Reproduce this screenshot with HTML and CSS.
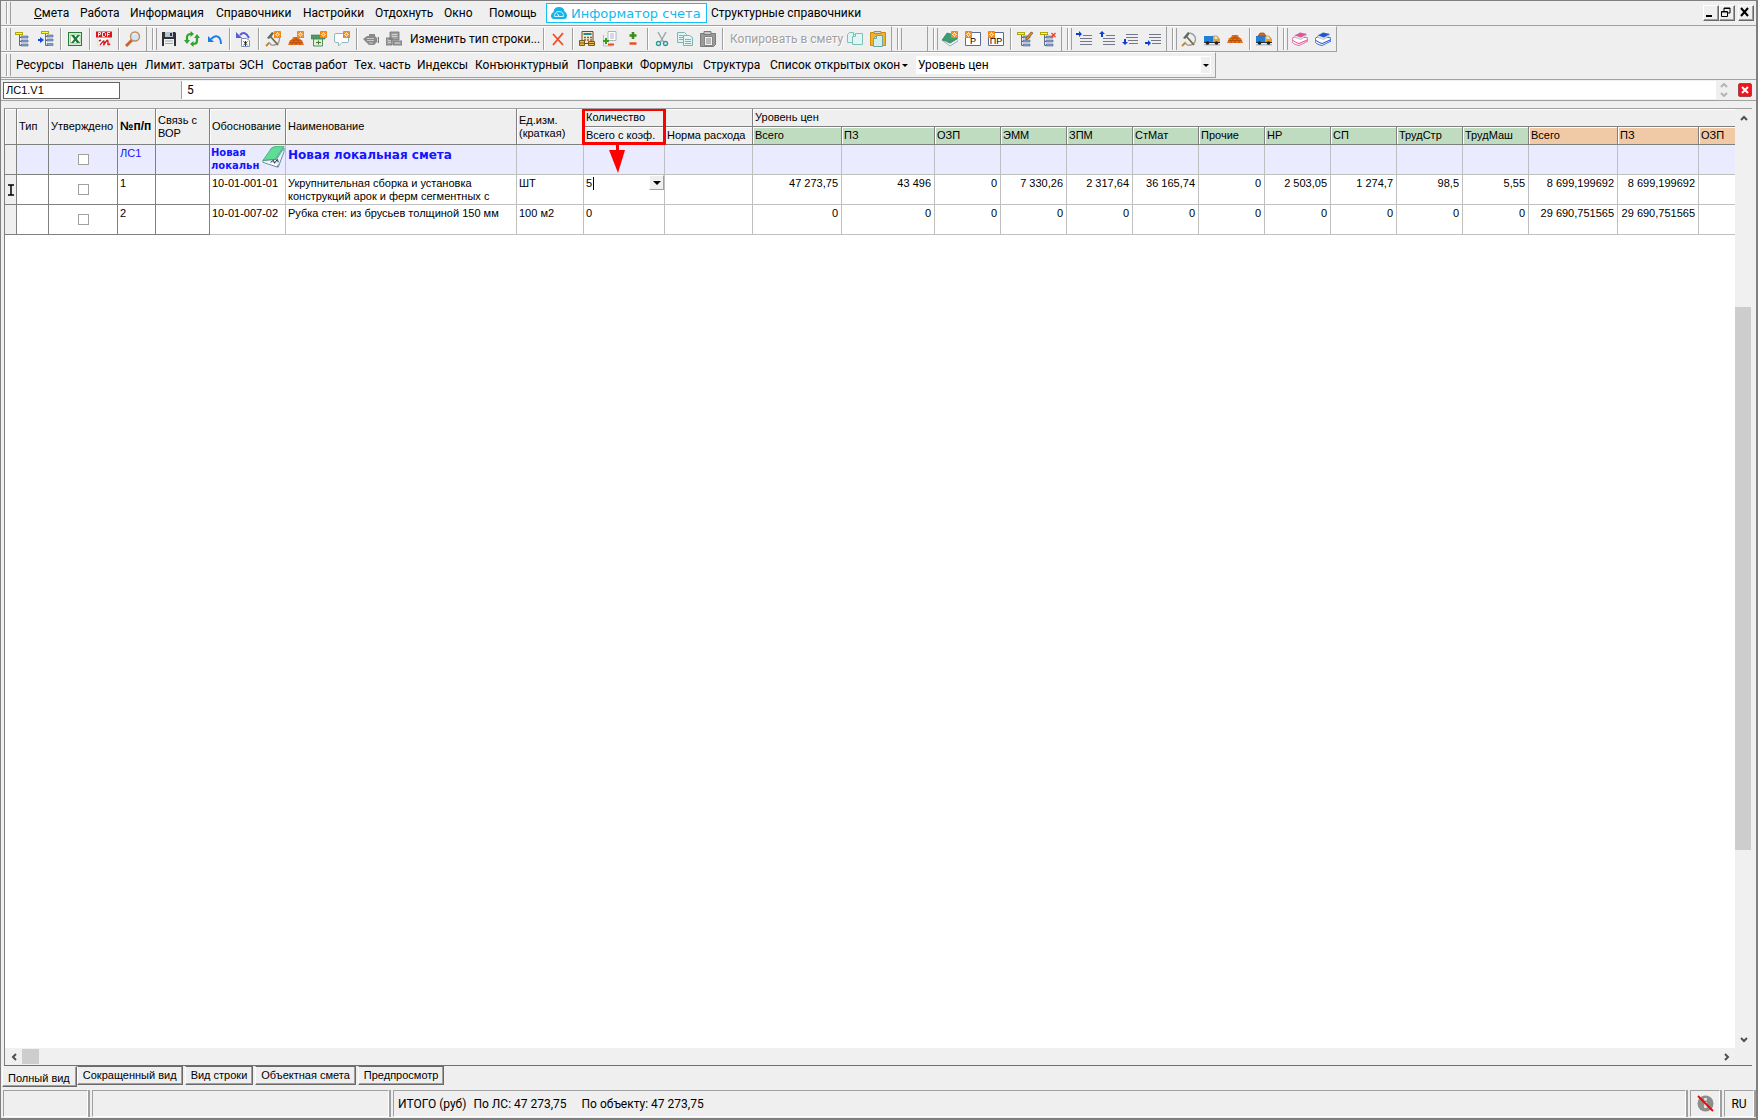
FILE: index.html
```html
<!DOCTYPE html>
<html lang="ru">

<head>
    <meta charset="UTF-8">
    <meta name="viewport" content="width=device-width, initial-scale=1.0">
    <title>Новая локальная смета</title>
    <link rel="stylesheet" href="styles.css">
</head>

<body>
    <!-- icons used in the toolbars -->
    <svg class="sprite" aria-hidden="true">
        <symbol id="new" viewBox="0 0 8 8">
            <rect width="8" height="8" rx="1" fill="#f0860c" />
            <path d="M4 1v6M1 4h6M2 2l4 4M6 2L2 6" stroke="#fff" stroke-width="0.8" />
            <circle cx="4" cy="4" r="1" fill="#f0860c" />
        </symbol>
        <symbol id="tree" viewBox="0 0 16 16">
            <rect x="0.5" y="1.5" width="7" height="2" fill="#ffff30" stroke="#b0a800" />
            <path d="M4.5 4v10.5h3M4.5 6.5h3M4.5 10.5h3" fill="none" stroke="#5f6f8a" />
            <path d="M6 5h7v2H6zM6 9h7v2H6zM6 13h7v2H6z" fill="#8aa4d0" stroke="#4c618c" stroke-width="0.6" />
        </symbol>
        <symbol id="tree-in" viewBox="0 0 16 16">
            <rect x="3.5" y="0.5" width="7" height="2" fill="#ffff30" stroke="#b0a800" />
            <path d="M7.5 3v11.5h3M7.5 5.5h3M7.5 9.5h3" fill="none" stroke="#5f6f8a" />
            <path d="M9 4h6v2H9zM9 8h6v2H9zM9 12.5h6v2H9z" fill="#8aa4d0" stroke="#4c618c" stroke-width="0.6" />
            <path d="M0 8h2V6l4 3-4 3v-2H0z" fill="#0a4be0" />
        </symbol>
        <symbol id="excel" viewBox="0 0 16 16">
            <rect x="1.5" y="1.5" width="13" height="13" fill="#d4e8d4" stroke="#2b7a38" />
            <path d="M3.5 4h9.5v8H3.5z" fill="#fff" stroke="#8fc095" stroke-width="0.6" />
            <path d="M4 4h3l6 8h-3zM10.5 4H13l-6.500 8H4z" fill="#1c7a30" />
        </symbol>
        <symbol id="pdf" viewBox="0 0 16 16">
            <path d="M2 2h12v13H2z" fill="#fff" stroke="#c8c8c8" stroke-width="0.6" />
            <path d="M0 0.5h16v6H0z" fill="#e0131b" />
            <path d="M2.5 5.5v-4H4.5v2h-2M6.5 1.5v4h2l1-1v-2l-1-1zM11.5 5.5v-4H14M11.5 3.5h2" fill="none" stroke="#fff" stroke-width="0.9" />
            <path d="M4 14c2-2 4-6 4-3s-1 4 1 1 3-4 3-1-1 3 2 2M3 10l2-1" fill="none" stroke="#d8171e" stroke-width="1.4" />
        </symbol>
        <symbol id="magnifier" viewBox="0 0 16 16">
            <path d="M1 15l6-6" stroke="#c8642c" stroke-width="3" />
            <circle cx="10" cy="5.5" r="4.5" fill="#cfe6fb" stroke="#c98a5c" stroke-width="1.4" />
            <path d="M8 4q1-1.5 3-1.5" stroke="#fff" fill="none" />
        </symbol>
        <symbol id="save" viewBox="0 0 16 16">
            <path d="M1 1h13l1 1v13H1z" fill="#2e3238" />
            <path d="M4 1h8v5H4z" fill="#b9c4d0" />
            <path d="M9 2h2v3H9z" fill="#2e3238" />
            <path d="M3 8h10v7H3z" fill="#f2f2f2" />
            <path d="M4 10h8M4 12.5h8" stroke="#9aa" />
        </symbol>
        <symbol id="refresh" viewBox="0 0 16 16">
            <path d="M3 10V6.5Q3 3 7 3M13 6v3.5q0 3.500-4 3.500" fill="none" stroke="#2da52a" stroke-width="2.2" />
            <path d="M0 9h6l-3 4zM16 7h-6l3-4z" fill="#2da52a" />
            <path d="M6.5 0l3.500 3-3.500 3zM9.500 16L6 13l3.500-3z" fill="#2da52a" />
        </symbol>
        <symbol id="undo" viewBox="0 0 16 16">
            <path d="M4 8q5-5 8.500-1 1.500 2 1.500 6" fill="none" stroke="#1c7be8" stroke-width="2" />
            <path d="M1 5v6h6z" fill="#1c7be8" />
        </symbol>
        <symbol id="restore-doc" viewBox="0 0 16 16">
            <path d="M4 4q5-5 9 3" fill="none" stroke="#5b5bd8" stroke-width="2" />
            <path d="M0 1v6h6z" fill="#5b5bd8" />
            <path d="M5.5 7.5h5l3 2v6h-8z" fill="#fff" stroke="#7d8fbc" />
            <path d="M7.5 10.5l4 3.5M11.5 10.5l-4 3.5M9.5 10v5" stroke="#222" stroke-width="0.9" />
        </symbol>
        <symbol id="hammer" viewBox="0 0 16 16">
            <path d="M9 2q6 2 5.500 7-1.500 6-8 5l-3-3" fill="none" stroke="#9aa4a4" stroke-width="1.5" />
            <path d="M1 15l3-3" stroke="#c8862c" stroke-width="2" />
            <path d="M5 5l8 9" stroke="#7d6844" stroke-width="1.8" />
            <path d="M2 7l5-6 2 1-2 3-3 3z" fill="#5e6a62" />
        </symbol>
        <symbol id="bricks" viewBox="0 0 16 16">
            <path d="M5 4h6l1 3h2l2 5H0l2-5h2z" fill="#e8701c" />
            <path d="M3 7h10M1.5 9.5h13M8 4v3M6 7v2M10 7v2M4 10v2M8 10v2M12 10v2" stroke="#a84806" stroke-width="0.8" />
        </symbol>
        <symbol id="box" viewBox="0 0 16 16">
            <path d="M0 4h14v4H0z" fill="#4c9a68" stroke="#2f7a4e" stroke-width="0.6" />
            <path d="M2.5 8h9v7h-9z" fill="#e9efd4" stroke="#4f8f64" />
            <path d="M5 11.5h5M7.5 9.5v4" stroke="#3b7a2c" />
        </symbol>
        <symbol id="comment" viewBox="0 0 16 16">
            <path d="M2 2.500h11q1.500 0 1.500 1.500v6q0 1.500-1.500 1.500H8L4.500 15v-3.500H2Q0.500 11.500 0.500 10V4Q0.500 2.500 2 2.500z" fill="#fff" stroke="#8fb8bc" />
        </symbol>
        <symbol id="engine" viewBox="0 0 16 16">
            <path d="M0 8l4-3h2V3h6v2l2 2v4l-3 3H6l-3-3z" fill="#8a8a8a" />
            <path d="M4 7.5h7M4 9.5h7M6 12h4" stroke="#c8c8c8" />
            <path d="M15.500 6v6" stroke="#777" stroke-width="1.4" />
        </symbol>
        <symbol id="blocks" viewBox="0 0 16 16">
            <path d="M4 1h9v8H4zM0 7h6v7H0zM7 10h9v4H7z" fill="#a0a0a0" stroke="#707070" stroke-width="0.8" />
            <path d="M6 3.5h5M6 5.500h5M2 9.500h3M2 11.500h3M9 12h5" stroke="#d0d0d0" />
        </symbol>
        <symbol id="delete" viewBox="0 0 16 16">
            <path d="M3 3l10 11M13 2L3 14" stroke="#f04a22" stroke-width="1.8" />
        </symbol>
        <symbol id="calc" viewBox="0 0 16 16">
            <path d="M3 0.5h11v12H3z" fill="#f2ead2" stroke="#6a4a26" />
            <path d="M4.5 2h8v2h-8z" fill="#1d8b92" />
            <path d="M5 6.5h8M5 9h8" stroke="#a0582c" stroke-width="1.5" stroke-dasharray="2 1" />
            <path d="M0.5 9.5h5v5h-5zM9.5 10.5h6v4h-6z" fill="#e8bb4e" stroke="#7b5a14" />
            <path d="M0 12h6M9 12.5h7" stroke="#7b5a14" />
        </symbol>
        <symbol id="doc-plusminus" viewBox="0 0 16 16">
            <path d="M6 0.5h8v9H6z" fill="#fff" stroke="#aab4c4" />
            <path d="M8 3h4M8 5h4M8 7h4" stroke="#aab4c4" />
            <path d="M1.5 4v11h9" fill="none" stroke="#b8bfca" />
            <path d="M4 7v6M1 10h6" stroke="#3c9a1c" stroke-width="2" />
            <path d="M6 13.5h6" stroke="#f0481e" stroke-width="2" />
        </symbol>
        <symbol id="plusminus" viewBox="0 0 16 16">
            <path d="M8 1v7M4.5 4.5h7" stroke="#3c8c1c" stroke-width="2.6" />
            <path d="M4.5 12.5h7" stroke="#f0481e" stroke-width="2.4" />
        </symbol>
        <symbol id="cut" viewBox="0 0 16 16">
            <path d="M4 1l5.5 10M12 1L6.5 11" stroke="#9aa8ae" stroke-width="1.5" />
            <circle cx="4.5" cy="12.5" r="2" fill="none" stroke="#2e9a9a" stroke-width="1.4" />
            <circle cx="11.5" cy="12.5" r="2" fill="none" stroke="#2e9a9a" stroke-width="1.4" />
        </symbol>
        <symbol id="copy" viewBox="0 0 16 16">
            <path d="M0.5 1.5h7l2 2v8h-9z" fill="#e2f4f4" stroke="#7fb3b3" />
            <path d="M6.5 4.5h6l3 2v8h-9z" fill="#e2f4f4" stroke="#7fb3b3" />
            <path d="M2 4.5h4M2 6.5h4M2 8.5h4M8 8.5h6M8 10.5h6M8 12.5h6" stroke="#7fb3b3" />
        </symbol>
        <symbol id="paste" viewBox="0 0 16 16">
            <path d="M0.5 2.5h15v11l-2 2h-13z" fill="#9b9b9b" stroke="#7b7b7b" />
            <path d="M4 0.5h7v3H4z" fill="#c8c8c8" stroke="#7b7b7b" />
            <path d="M4.5 5.5h8v9h-8z" fill="#f0f0f0" stroke="#858585" />
            <path d="M6 8h5M6 10h5M6 12h5" stroke="#858585" />
        </symbol>
        <symbol id="copy-empty" viewBox="0 0 16 16">
            <path d="M0.5 3.5l2-2h4v10h-6z" fill="#dff6f2" stroke="#7fc0b8" />
            <path d="M5.5 5.500l3-3h7v11h-10z" fill="#dff6f2" stroke="#7fc0b8" />
            <path d="M5.5 5.500h3v-3" fill="none" stroke="#7fc0b8" />
        </symbol>
        <symbol id="paste-color" viewBox="0 0 16 16">
            <path d="M0.5 1.5h15v13h-15z" fill="#f2b430" stroke="#c98a10" />
            <path d="M4 0.5h7v2H4z" fill="#ddd" stroke="#b08a3a" />
            <path d="M3.5 7.5l3-3h6v11h-9z" fill="#d4f0ee" stroke="#6ca8a0" />
            <path d="M3.5 7.5h3v-3" fill="none" stroke="#6ca8a0" />
        </symbol>
        <symbol id="book-green" viewBox="0 0 16 16">
            <path d="M0 9l8 6 8-5V7l-8 5z" fill="#eef4f6" stroke="#7f9fa8" stroke-width="0.8" />
            <path d="M0 9l5-7 9 2 1 4-7 4q-4-3-8-3z" fill="#3f9c70" stroke="#2b7c58" stroke-width="0.6" />
        </symbol>
        <symbol id="page" viewBox="0 0 16 16">
            <path d="M0.5 1.5h15v13h-15z" fill="#fff" stroke="#5a6a9a" />
        </symbol>
        <symbol id="tree-edit" viewBox="0 0 16 16">
            <use href="#tree" />
            <path d="M9 7l5-6 2 1-5 6-2 1z" fill="#f08c1c" stroke="#5a3a10" stroke-width="0.6" />
        </symbol>
        <symbol id="tree-delete" viewBox="0 0 16 16">
            <use href="#tree" />
            <path d="M11.5 2l4 4M15.5 2l-4 4" stroke="#f0401e" stroke-width="1.3" />
        </symbol>
        <symbol id="level-1" viewBox="0 0 16 16">
            <path d="M7 4.5h9M4 7.5h12M4 10.5h12M4 13.5h12" stroke="#74788c" />
            <path d="M0 2h3V0l3 3-3 3V4H0z" fill="#0a40d8" />
        </symbol>
        <symbol id="level-2" viewBox="0 0 16 16">
            <path d="M7 4.5h9M4 7.5h12M4 10.5h12M4 13.5h12" stroke="#74788c" />
            <path d="M2 6V3H0l3-3 3 3H4v3z" fill="#0a40d8" />
        </symbol>
        <symbol id="level-3" viewBox="0 0 16 16">
            <path d="M4 3.5h12M4 6.5h12M6 9.5h10M7 12.5h9" stroke="#74788c" />
            <path d="M2 8v3H0l3 3 3-3H4V8z" fill="#0a40d8" />
        </symbol>
        <symbol id="level-4" viewBox="0 0 16 16">
            <path d="M4 3.5h12M4 6.5h12M6 9.5h10M7 12.5h9" stroke="#74788c" />
            <path d="M0 11h3V9l3 3-3 3v-2H0z" fill="#0a40d8" />
        </symbol>
        <symbol id="truck" viewBox="0 0 16 16">
            <path d="M0 13h16v1.500H0z" fill="#bbb" />
            <path d="M0 5h9v6.500H0z" fill="#2080d8" />
            <path d="M9 4.500h4l3 3.500v3.500H9z" fill="#e8a030" />
            <path d="M10.500 5.500h2l1.500 2.500h-3.500z" fill="#cfe9f8" />
            <path d="M0 11h16v1H0z" fill="#234" />
            <circle cx="3.5" cy="12" r="1.800" fill="#222" />
            <circle cx="12.5" cy="12" r="1.800" fill="#222" />
        </symbol>
        <symbol id="truck-loaded" viewBox="0 0 16 16">
            <use href="#truck" />
            <path d="M2 5l2-3h4l2 3z" fill="#e0661a" stroke="#8f3c08" stroke-width="0.6" />
        </symbol>
        <symbol id="books" viewBox="0 0 16 16">
            <path d="M0 10q0 3 7 4.500L16 10V8.500L7 12.500 0 9z" fill="#fff" stroke="currentColor" stroke-width="0.9" />
            <path d="M0 7.500L4 5l12 2v1.500L7 12.500Q0 10 0 7.500z" fill="#fff" stroke="currentColor" stroke-width="0.9" />
            <path d="M3 4v2.500l6 2L14 5V3z" fill="#e0e4ec" stroke="#999" stroke-width="0.5" />
            <path d="M3 4.500L8 1.500 15 3 9 6.500z" fill="currentColor" />
        </symbol>
    </svg>

    <header class="bars">
        <div class="menubar">
            <span class="grip"></span>
            <nav class="menu">
                <button type="button"><u>С</u>мета</button>
                <button type="button">Работа</button>
                <button type="button">Информация</button>
                <button type="button">Справочники</button>
                <button type="button">Настройки</button>
                <button type="button">Отдохнуть</button>
                <button type="button">Окно</button>
                <button type="button">Помощь</button>
            </nav>
            <button type="button" class="informer">
                <svg viewBox="0 0 16 12" aria-hidden="true">
                    <path d="M3 12Q0 12 0 8.500 0 6 2.500 5 3 0 8 0t5.500 4.500Q16 5.500 16 8.500 16 12 13 12z" fill="#12b4ea" />
                    <path d="M3.500 9.500q0-5 4.500-5t4.500 5z" fill="none" stroke="#fff" stroke-width="0.8" />
                    <path d="M8 9L6 6.500" stroke="#fff" />
                </svg>
                Информатор счета
            </button>
            <button type="button" class="menu-link">Структурные справочники</button>
            <div class="win-buttons">
                <button type="button" aria-label="Свернуть"><svg viewBox="0 0 12 12"><path d="M2 10h6" stroke="#000" stroke-width="2" /></svg></button>
                <button type="button" aria-label="Восстановить"><svg viewBox="0 0 12 12"><path d="M4 5V2h6v5H8M4 2.500h6" fill="none" stroke="#000" /><path d="M1.500 5.500h6v5h-6zM1.500 6h6" fill="none" stroke="#000" /></svg></button>
                <button type="button" class="win-close" aria-label="Закрыть"><svg viewBox="0 0 12 12"><path d="M2 2l7 8M9 2l-7 8" stroke="#000" stroke-width="2" /></svg></button>
            </div>
        </div>

        <div class="toolbar-row">
            <div class="toolbar">
                <span class="grip"></span>
                <button type="button" class="tool" aria-label="Структура"><svg><use href="#tree" /></svg></button>
                <button type="button" class="tool" aria-label="Вставить в структуру"><svg><use href="#tree-in" /></svg></button>
                <span class="sep"></span>
                <button type="button" class="tool" aria-label="Excel"><svg><use href="#excel" /></svg></button>
                <span class="sep"></span>
                <button type="button" class="tool" aria-label="PDF"><svg><use href="#pdf" /></svg></button>
                <span class="sep"></span>
                <button type="button" class="tool" aria-label="Поиск"><svg><use href="#magnifier" /></svg></button>
            </div>
            <div class="toolbar">
                <span class="grip"></span>
                <button type="button" class="tool" aria-label="Сохранить"><svg><use href="#save" /></svg></button>
                <button type="button" class="tool" aria-label="Обновить"><svg><use href="#refresh" /></svg></button>
                <button type="button" class="tool" aria-label="Отменить"><svg><use href="#undo" /></svg></button>
                <span class="sep"></span>
                <button type="button" class="tool" aria-label="Восстановить строку"><svg><use href="#restore-doc" /></svg></button>
                <span class="sep"></span>
                <button type="button" class="tool" aria-label="Новая работа"><svg><use href="#hammer" /><use href="#new" x="9" width="7" height="7" /></svg></button>
                <button type="button" class="tool" aria-label="Новый материал"><svg><use href="#bricks" y="2" width="16" height="16" /><use href="#new" x="9" width="7" height="7" /></svg></button>
                <button type="button" class="tool" aria-label="Новое оборудование"><svg><use href="#box" /><use href="#new" x="9" width="7" height="7" /></svg></button>
                <button type="button" class="tool" aria-label="Новый комментарий"><svg><use href="#comment" /><use href="#new" x="9" width="7" height="7" /></svg></button>
                <span class="sep"></span>
                <button type="button" class="tool" aria-label="Механизм" disabled><svg><use href="#engine" /></svg></button>
                <button type="button" class="tool" aria-label="Блоки" disabled><svg><use href="#blocks" /></svg></button>
                <button type="button" class="tool-text row-type">Изменить тип строки...</button>
                <span class="sep"></span>
                <button type="button" class="tool" aria-label="Удалить"><svg><use href="#delete" /></svg></button>
                <span class="sep"></span>
                <button type="button" class="tool" aria-label="Расчет"><svg><use href="#calc" /></svg></button>
                <button type="button" class="tool" aria-label="Поправки к документу"><svg><use href="#doc-plusminus" /></svg></button>
                <button type="button" class="tool" aria-label="Плюс минус"><svg><use href="#plusminus" /></svg></button>
                <span class="sep"></span>
                <button type="button" class="tool" aria-label="Вырезать"><svg><use href="#cut" /></svg></button>
                <button type="button" class="tool" aria-label="Копировать"><svg><use href="#copy" /></svg></button>
                <button type="button" class="tool" aria-label="Вставить"><svg><use href="#paste" /></svg></button>
                <span class="sep"></span>
                <button type="button" class="tool-text copy-to" disabled>Копировать в смету</button>
                <button type="button" class="tool" aria-label="Копировать в буфер"><svg><use href="#copy-empty" /></svg></button>
                <button type="button" class="tool" aria-label="Вставить из буфера"><svg><use href="#paste-color" /></svg></button>
            </div>
            <div class="toolbar">
                <span class="grip"></span>
                <span class="tool"></span>
            </div>
            <div class="toolbar">
                <span class="grip"></span>
                <button type="button" class="tool" aria-label="Новая смета"><svg><use href="#book-green" /><use href="#new" x="9" width="7" height="7" /></svg></button>
                <button type="button" class="tool page-tool"><svg><use href="#page" /><use href="#new" width="7" height="7" /></svg><span>Р</span></button>
                <button type="button" class="tool page-tool"><svg><use href="#page" /><use href="#new" width="7" height="7" /></svg><span>ПР</span></button>
                <span class="sep"></span>
                <button type="button" class="tool" aria-label="Изменить структуру"><svg><use href="#tree-edit" /></svg></button>
                <button type="button" class="tool" aria-label="Удалить структуру"><svg><use href="#tree-delete" /></svg></button>
            </div>
            <div class="toolbar">
                <span class="grip"></span>
                <button type="button" class="tool" aria-label="Уровень 1"><svg><use href="#level-1" /></svg></button>
                <button type="button" class="tool" aria-label="Уровень 2"><svg><use href="#level-2" /></svg></button>
                <button type="button" class="tool" aria-label="Уровень 3"><svg><use href="#level-3" /></svg></button>
                <button type="button" class="tool" aria-label="Уровень 4"><svg><use href="#level-4" /></svg></button>
            </div>
            <div class="toolbar">
                <span class="grip"></span>
                <button type="button" class="tool" aria-label="Работы"><svg><use href="#hammer" /></svg></button>
                <button type="button" class="tool" aria-label="Машины"><svg><use href="#truck" /></svg></button>
                <button type="button" class="tool" aria-label="Материалы"><svg><use href="#bricks" /></svg></button>
                <span class="sep"></span>
                <button type="button" class="tool" aria-label="Перевозка"><svg><use href="#truck-loaded" /></svg></button>
            </div>
            <div class="toolbar">
                <span class="grip"></span>
                <button type="button" class="tool books-pink" aria-label="Справочник 1"><svg><use href="#books" /></svg></button>
                <button type="button" class="tool books-blue" aria-label="Справочник 2"><svg><use href="#books" /></svg></button>
            </div>
        </div>

        <div class="toolbar-row">
            <div class="toolbar">
                <span class="grip"></span>
                <div class="views">
                    <button type="button" class="tool-text">Ресурсы</button>
                    <button type="button" class="tool-text">Панель цен</button>
                    <button type="button" class="tool-text">Лимит. затраты</button>
                    <button type="button" class="tool-text">ЭСН</button>
                    <button type="button" class="tool-text">Состав работ</button>
                    <button type="button" class="tool-text">Тех. часть</button>
                    <button type="button" class="tool-text">Индексы</button>
                    <button type="button" class="tool-text">Конъюнктурный</button>
                    <button type="button" class="tool-text">Поправки</button>
                    <button type="button" class="tool-text">Формулы</button>
                    <button type="button" class="tool-text">Структура</button>
                    <button type="button" class="tool-text open-list">Список открытых окон <i class="arrow"></i></button>
                </div>
                <div class="level">
                    <select aria-label="Уровень цен">
                        <option>Уровень цен</option>
                    </select>
                    <i class="arrow"></i>
                </div>
            </div>
        </div>
    </header>

    <div class="formula">
        <input type="text" class="cell-name" value="ЛС1.V1" aria-label="Ячейка">
        <input type="text" class="cell-value" value="5" aria-label="Значение">
        <div class="spin">
            <svg viewBox="0 0 8 14"><path d="M1 4l3-3 3 3M1 10l3 3 3-3" fill="none" stroke="#b4b4b4" stroke-width="2" /></svg>
        </div>
        <button type="button" class="red-close" aria-label="Закрыть"><svg viewBox="0 0 8 8"><path d="M1 1l6 6M7 1L1 7" stroke="#fff" stroke-width="2" /></svg></button>
    </div>

    <main class="sheet">
        <div class="grid-area">
            <table>
                <colgroup>
                    <col class="c-mark">
                    <col class="c-type">
                    <col class="c-ok">
                    <col class="c-num">
                    <col class="c-link">
                    <col class="c-code">
                    <col class="c-name">
                    <col class="c-unit">
                    <col class="c-qty">
                    <col class="c-norm">
                    <col class="c-total">
                    <col class="c-direct">
                    <col class="c-sum" span="9">
                    <col class="c-total">
                    <col class="c-base">
                    <col>
                </colgroup>
                <thead>
                    <tr>
                        <th rowspan="2"></th>
                        <th rowspan="2">Тип</th>
                        <th rowspan="2">Утверждено</th>
                        <th rowspan="2" class="bold">№п/п</th>
                        <th rowspan="2" class="two-lines">Связь с<br>ВОР</th>
                        <th rowspan="2">Обоснование</th>
                        <th rowspan="2">Наименование</th>
                        <th rowspan="2" class="two-lines">Ед.изм.<br>(краткая)</th>
                        <th colspan="2" class="qty-head">Количество
                            <span class="callout"></span>
                            <svg class="callout-arrow" viewBox="0 0 16 30" aria-hidden="true"><path d="M7 0h3v7h6L9 30 0 7h7z" fill="#f00" /></svg>
                        </th>
                        <th colspan="14">Уровень цен</th>
                    </tr>
                    <tr>
                        <th>Всего с коэф.</th>
                        <th>Норма расхода</th>
                        <th class="green">Всего</th>
                        <th class="green">ПЗ</th>
                        <th class="green">ОЗП</th>
                        <th class="green">ЭММ</th>
                        <th class="green">ЗПМ</th>
                        <th class="green">СтМат</th>
                        <th class="green">Прочие</th>
                        <th class="green">НР</th>
                        <th class="green">СП</th>
                        <th class="green">ТрудСтр</th>
                        <th class="green">ТрудМаш</th>
                        <th class="orange">Всего</th>
                        <th class="orange">ПЗ</th>
                        <th class="orange">ОЗП</th>
                    </tr>
                </thead>
                <tbody>
                    <tr class="estimate">
                        <td class="mark"></td>
                        <td class="fixed"></td>
                        <td class="fixed check"><input type="checkbox" aria-label="Утверждено ЛС1"></td>
                        <td class="fixed">ЛС1</td>
                        <td class="fixed"></td>
                        <td class="code">
                            <div>
                                <span>Новая локальн</span>
                                <svg viewBox="0 0 24 24" aria-hidden="true">
                                    <path d="M1 15l16 7 6-16V2l-8 12z" fill="#e6f3fa" stroke="#5d8aa0" />
                                    <path d="M1 15v2l15 5 1-3" fill="#fff" stroke="#5d8aa0" />
                                    <path d="M1 15L10 2q5-3 13-2L14 14q-6 0-13 1z" fill="#5fdc96" stroke="#279a5a" stroke-width="0.7" />
                                    <path d="M9 17l3-2 1 3 3-4 1 3" fill="none" stroke="#223" />
                                </svg>
                            </div>
                        </td>
                        <td class="title">Новая локальная смета</td>
                        <td></td>
                        <td></td>
                        <td></td>
                        <td></td>
                        <td></td>
                        <td></td>
                        <td></td>
                        <td></td>
                        <td></td>
                        <td></td>
                        <td></td>
                        <td></td>
                        <td></td>
                        <td></td>
                        <td></td>
                        <td></td>
                        <td></td>
                    </tr>
                    <tr>
                        <td class="mark"><svg viewBox="0 0 8 12" aria-hidden="true"><path d="M1 1h6M4 1v10M1 11h6" fill="none" stroke="#000" stroke-width="1.5" /></svg></td>
                        <td class="fixed"></td>
                        <td class="fixed check"><input type="checkbox" aria-label="Утверждено 1"></td>
                        <td class="fixed">1</td>
                        <td class="fixed"></td>
                        <td>10-01-001-01</td>
                        <td>Укрупнительная сборка и установка<br>конструкций арок и ферм сегментных с</td>
                        <td>ШТ</td>
                        <td class="edit">
                            <div>
                                <input type="text" value="5" aria-label="Количество">
                                <button type="button" aria-label="Выбрать"><i class="arrow"></i></button>
                            </div>
                        </td>
                        <td></td>
                        <td class="n">47 273,75</td>
                        <td class="n">43 496</td>
                        <td class="n">0</td>
                        <td class="n">7 330,26</td>
                        <td class="n">2 317,64</td>
                        <td class="n">36 165,74</td>
                        <td class="n">0</td>
                        <td class="n">2 503,05</td>
                        <td class="n">1 274,7</td>
                        <td class="n">98,5</td>
                        <td class="n">5,55</td>
                        <td class="n">8 699,199692</td>
                        <td class="n">8 699,199692</td>
                        <td></td>
                    </tr>
                    <tr>
                        <td class="mark"></td>
                        <td class="fixed"></td>
                        <td class="fixed check"><input type="checkbox" aria-label="Утверждено 2"></td>
                        <td class="fixed">2</td>
                        <td class="fixed"></td>
                        <td>10-01-007-02</td>
                        <td>Рубка стен: из брусьев толщиной 150 мм</td>
                        <td>100 м2</td>
                        <td>0</td>
                        <td></td>
                        <td class="n">0</td>
                        <td class="n">0</td>
                        <td class="n">0</td>
                        <td class="n">0</td>
                        <td class="n">0</td>
                        <td class="n">0</td>
                        <td class="n">0</td>
                        <td class="n">0</td>
                        <td class="n">0</td>
                        <td class="n">0</td>
                        <td class="n">0</td>
                        <td class="n">29 690,751565</td>
                        <td class="n">29 690,751565</td>
                        <td></td>
                    </tr>
                </tbody>
            </table>
        </div>
        <div class="scroll-v">
            <button type="button" aria-label="Вверх"><svg viewBox="0 0 8 8"><path d="M1 6l3-3 3 3" /></svg></button>
            <div class="track"><div class="thumb"></div></div>
            <button type="button" aria-label="Вниз"><svg viewBox="0 0 8 8"><path d="M1 2l3 3 3-3" /></svg></button>
        </div>
        <div class="scroll-h">
            <button type="button" aria-label="Влево"><svg viewBox="0 0 8 8"><path d="M6 1L3 4l3 3" /></svg></button>
            <div class="track"><div class="thumb"></div></div>
            <button type="button" aria-label="Вправо"><svg viewBox="0 0 8 8"><path d="M2 1l3 3-3 3" /></svg></button>
        </div>
    </main>

    <div class="tabs">
        <button type="button" class="active">Полный вид</button>
        <button type="button">Сокращенный вид</button>
        <button type="button">Вид строки</button>
        <button type="button">Объектная смета</button>
        <button type="button">Предпросмотр</button>
    </div>

    <footer class="status">
        <div class="panel p-first"></div>
        <div class="panel p-second"></div>
        <div class="panel p-total"><span>ИТОГО (руб)</span><span>По ЛС: 47 273,75</span><span class="by-object">По объекту: 47 273,75</span></div>
        <div class="panel p-info">
            <svg viewBox="0 0 17 17" aria-hidden="true">
                <circle cx="8.500" cy="8.500" r="8" fill="#8e8e8e" />
                <path d="M8.500 3v2.500M8.500 7v6" stroke="#eee" stroke-width="2.5" />
                <path d="M1 1l15 15" stroke="#f00" stroke-width="2" />
            </svg>
        </div>
        <div class="panel p-lang">RU</div>
    </footer>
</body>

</html>
```

FILE: styles.css
```css
* {
    box-sizing: border-box;
}

body {
    margin: 0;
    height: 100vh;
    display: flex;
    flex-direction: column;
    background-color: #efefef;
    border-top: 1px solid #808080;
    border-left: 1px solid #808080;
    border-right: 2px solid #808080;
    border-bottom: 2px solid #808080;
    font-family: Roboto, "Open Sans", sans-serif;
    font-size: 12px;
    color: #000;
    overflow: hidden;
}

button,
input,
select {
    font: inherit;
    color: inherit;
    margin: 0;
    padding: 0;
    border: none;
    border-radius: 0;
    background: none;
}

.sprite {
    display: none;
}

/* menu and toolbars */
.menubar {
    display: flex;
    align-items: center;
    height: 25px;
    padding-left: 5px;
    border-bottom: 1px solid #a0a0a0;
}

.grip {
    width: 5px;
    height: 22px;
    flex: none;
    margin-right: 1px;
    border: solid #a0a0a0;
    border-width: 0 1px;
    background: linear-gradient(90deg, #fff 1px, transparent 1px);
}

.menu {
    display: grid;
    grid-template-columns: 46px 50px 86px 87px 72px 69px 45px 57px;
    padding-left: 22px;
}

.menu button,
.menu-link {
    text-align: left;
    white-space: nowrap;
}

.informer {
    display: flex;
    align-items: center;
    gap: 4px;
    width: 161px;
    height: 20px;
    padding-left: 4px;
    border: 1px solid #12c0f4;
    background-color: #fff;
    color: #12b8ee;
    font-family: "DejaVu Sans", sans-serif;
    font-size: 13px;
    white-space: nowrap;
}

.informer svg {
    width: 16px;
    height: 12px;
    flex: none;
}

.menu-link {
    padding-left: 4px;
}

.win-buttons {
    display: flex;
    margin-left: auto;
    padding-right: 2px;
}

.win-buttons button {
    width: 16px;
    height: 16px;
    display: flex;
    border: 1px solid;
    border-color: #fff #696969 #696969 #fff;
    box-shadow: inset -1px -1px #a0a0a0;
}

.win-buttons svg {
    width: 12px;
    height: 12px;
}

.win-buttons .win-close {
    margin-left: 3px;
}

.toolbar-row {
    display: flex;
}

.toolbar {
    display: flex;
    align-items: center;
    height: 26px;
    padding: 0 1px 0 5px;
    border-right: 1px solid #a0a0a0;
    border-bottom: 1px solid #a0a0a0;
    border-top: 1px solid #fff;
}

.tool {
    width: 23px;
    height: 22px;
    padding-left: 3px;
    display: flex;
    align-items: center;
}

.tool svg {
    width: 16px;
    height: 16px;
    overflow: visible;
}

.sep {
    width: 6px;
    height: 22px;
    background: linear-gradient(90deg, transparent 2px, #a0a0a0 2px, #a0a0a0 3px, #fff 3px, #fff 4px, transparent 4px);
}

.tool-text {
    white-space: nowrap;
    text-align: left;
    padding-left: 4px;
}

.tool-text:disabled {
    color: #a0a0a0;
    text-shadow: 1px 1px #fff;
}

.row-type {
    width: 135px;
}

.copy-to {
    width: 118px;
}

.page-tool {
    position: relative;
}

.page-tool span {
    position: absolute;
    right: 5px;
    bottom: 4px;
    width: 14px;
    text-align: center;
    font: 9px/10px "Liberation Sans", sans-serif;
}

.books-pink {
    color: #e0559a;
}

.books-blue {
    color: #2058d0;
}

.views {
    display: grid;
    grid-template-columns: 56px 73px 94px 33px 82px 63px 58px 102px 63px 63px 67px 146px;
}

.arrow {
    display: inline-block;
    border: 3px solid transparent;
    border-top-color: #000;
    border-bottom: none;
}

.open-list {
    display: flex;
    align-items: center;
    justify-content: space-between;
    padding-right: 4px;
}

.level {
    display: flex;
    align-items: center;
    position: relative;
    width: 302px;
    height: 22px;
    padding: 0 3px 0 4px;
}

.level select {
    width: 100%;
    height: 18px;
    appearance: none;
    padding-left: 2px;
    background: linear-gradient(#efefef, #efefef) right 1px center / 9px 16px no-repeat #fff;
}

.level .arrow {
    position: absolute;
    right: 5px;
}

/* formula line */
.formula {
    display: flex;
    align-items: center;
    height: 22px;
    margin-top: 1px;
    padding: 1px 4px 1px 2px;
    border-top: 1px solid #a0a0a0;
    border-bottom: 1px solid #a0a0a0;
    flex: none;
}

.cell-name {
    width: 117px;
    height: 17px;
    padding-left: 2px;
    border: 1px solid #646464;
    background-color: #fff;
    font: 11px "Liberation Sans", sans-serif;
}

.cell-value {
    flex: 1;
    height: 18px;
    margin-left: 61px;
    padding-left: 5px;
    border-left: 1px solid #a0a0a0;
    background-color: #fff;
}

.spin {
    width: 16px;
    height: 18px;
    display: flex;
    align-items: center;
    justify-content: center;
}

.spin svg {
    width: 8px;
    height: 14px;
}

.red-close {
    width: 14px;
    height: 14px;
    margin-left: 6px;
    display: flex;
    align-items: center;
    justify-content: center;
    border: 1px solid #a8434a;
    border-radius: 2px;
    background-color: #f0141e;
}

.red-close svg {
    width: 8px;
    height: 8px;
}

/* table */
.sheet {
    flex: 1;
    min-height: 0;
    display: grid;
    grid-template-columns: 1fr 17px;
    grid-template-rows: 1fr 17px;
    margin: 7px 4px 0 3px;
    border-top: 1px solid #a0a0a0;
    border-left: 1px solid #808080;
    border-bottom: 1px solid #707070;
    font: 11px/13px "Liberation Sans", sans-serif;
}

.grid-area {
    background-color: #fff;
    overflow: hidden;
}

table {
    width: 100%;
    table-layout: fixed;
    border-collapse: separate;
    border-spacing: 0;
}

.c-mark { width: 12px; }
.c-type { width: 32px; }
.c-ok { width: 69px; }
.c-num { width: 38px; }
.c-link { width: 54px; }
.c-code { width: 76px; }
.c-name { width: 231px; }
.c-unit { width: 67px; }
.c-qty { width: 81px; }
.c-norm { width: 88px; }
.c-total { width: 89px; }
.c-direct { width: 93px; }
.c-sum { width: 66px; }
.c-base { width: 81px; }

th {
    height: 18px;
    padding: 0 0 0 2px;
    border-right: 1px solid #808080;
    border-bottom: 1px solid #808080;
    box-shadow: inset 1px 1px #fff;
    background-color: #efefef;
    font-weight: normal;
    text-align: left;
    white-space: nowrap;
}

th:last-child,
td:last-child {
    border-right: none;
}

th.bold {
    font-size: 12px;
    font-weight: bold;
}

th.two-lines {
    vertical-align: top;
    padding-top: 5px;
}

th.green {
    background-color: #c0dcc0;
}

th.orange {
    background-color: #f0caa6;
}

.qty-head {
    position: relative;
}

/* red frame over the quantity header with an arrow to the cell */
.callout {
    position: absolute;
    top: -1px;
    left: -2px;
    width: 84px;
    height: 37px;
    border: 3px solid #f00;
}

.callout-arrow {
    position: absolute;
    top: 34px;
    left: 25px;
    width: 16px;
    height: 30px;
}

td {
    height: 30px;
    padding: 2px 2px 0;
    border-right: 1px solid #c0c0c0;
    border-bottom: 1px solid #c0c0c0;
    vertical-align: top;
    white-space: nowrap;
    overflow: hidden;
}

td.fixed,
td.mark {
    border-color: #808080;
}

td.mark {
    background-color: #efefef;
    padding: 0;
    vertical-align: middle;
}

.mark svg {
    display: block;
    width: 8px;
    height: 12px;
    margin: auto;
}

td.check {
    padding: 0;
    vertical-align: middle;
    text-align: center;
}

.check input {
    appearance: none;
    display: block;
    width: 11px;
    height: 11px;
    margin: auto;
    border: 1px solid #a0a0a0;
    background-color: #fff;
}

td.n {
    padding-right: 3px;
    text-align: right;
}

.estimate td {
    background-color: #ebebff;
    color: #1414ff;
}

.estimate td.mark {
    background-color: #efefef;
}

.estimate td.code {
    padding: 1px 0 0 1px;
    font: bold 10px/13px "DejaVu Sans", sans-serif;
}

.code div {
    display: flex;
    justify-content: space-between;
    height: 26px;
    overflow: hidden;
}

.code span {
    width: 50px;
    white-space: normal;
}

.code svg {
    width: 23px;
    height: 23px;
    flex: none;
}

.estimate td.title {
    padding-top: 3px;
    font: bold 12px/14px "DejaVu Sans", sans-serif;
}

td.edit {
    padding: 0 0 0 2px;
}

.edit div {
    display: flex;
    align-items: flex-start;
}

/* the thin line after the value is the text cursor */
.edit input {
    flex: 1;
    min-width: 0;
    height: 16px;
    background: linear-gradient(#000, #000) 7px 2px / 1px 13px no-repeat;
}

.edit button {
    width: 15px;
    height: 15px;
    display: flex;
    align-items: center;
    justify-content: center;
    border: 1px solid;
    border-color: #fff #a0a0a0 #a0a0a0 #fff;
    background-color: #efefef;
}

.edit .arrow {
    border-width: 4px;
    border-bottom: none;
}

/* scrollbars */
.scroll-v,
.scroll-h {
    display: flex;
    background-color: #f0f0f0;
}

.scroll-v {
    flex-direction: column;
}

.scroll-v button,
.scroll-h button {
    width: 17px;
    height: 17px;
    display: flex;
    align-items: center;
    justify-content: center;
}

.scroll-v svg,
.scroll-h svg {
    width: 8px;
    height: 8px;
    fill: none;
    stroke: #505050;
    stroke-width: 2;
}

.track {
    flex: 1;
    display: flex;
    align-items: center;
}

.scroll-v .thumb {
    width: 16px;
    height: 60%;
    background-color: #cdcdcd;
}

.scroll-h .thumb {
    width: 17px;
    height: 15px;
    background-color: #cdcdcd;
}

/* sheet tabs */
.tabs {
    display: flex;
    align-items: flex-start;
    height: 23px;
    padding-left: 1px;
    flex: none;
    font: 11px/14px "Liberation Sans", sans-serif;
}

.tabs button {
    height: 19px;
    padding: 0 5px 1px;
    border: 1px solid;
    border-color: #696969 #696969 #696969 #fff;
    box-shadow: inset -1px -1px #a0a0a0;
    white-space: nowrap;
    margin-right: 2px;
}

.tabs .active {
    height: 21px;
    margin-right: 0;
    padding: 3px 6px 0 5px;
    border-top-color: #efefef;
}

/* status bar */
.status {
    display: flex;
    gap: 4px;
    height: 29px;
    padding: 1px 2px 1px 2px;
    flex: none;
}

.panel {
    display: flex;
    align-items: center;
    border: 1px solid;
    border-color: #a0a0a0 #fff #fff #a0a0a0;
    box-shadow: 2px 0 #a0a0a0;
    white-space: nowrap;
}

.p-first {
    width: 85px;
}

.p-second {
    width: 297px;
}

.p-total {
    flex: 1;
    gap: 7px;
    padding-left: 4px;
}

.by-object {
    margin-left: 8px;
}

.p-info,
.p-lang {
    width: 30px;
    justify-content: center;
}

.p-info svg {
    width: 17px;
    height: 17px;
}
```
